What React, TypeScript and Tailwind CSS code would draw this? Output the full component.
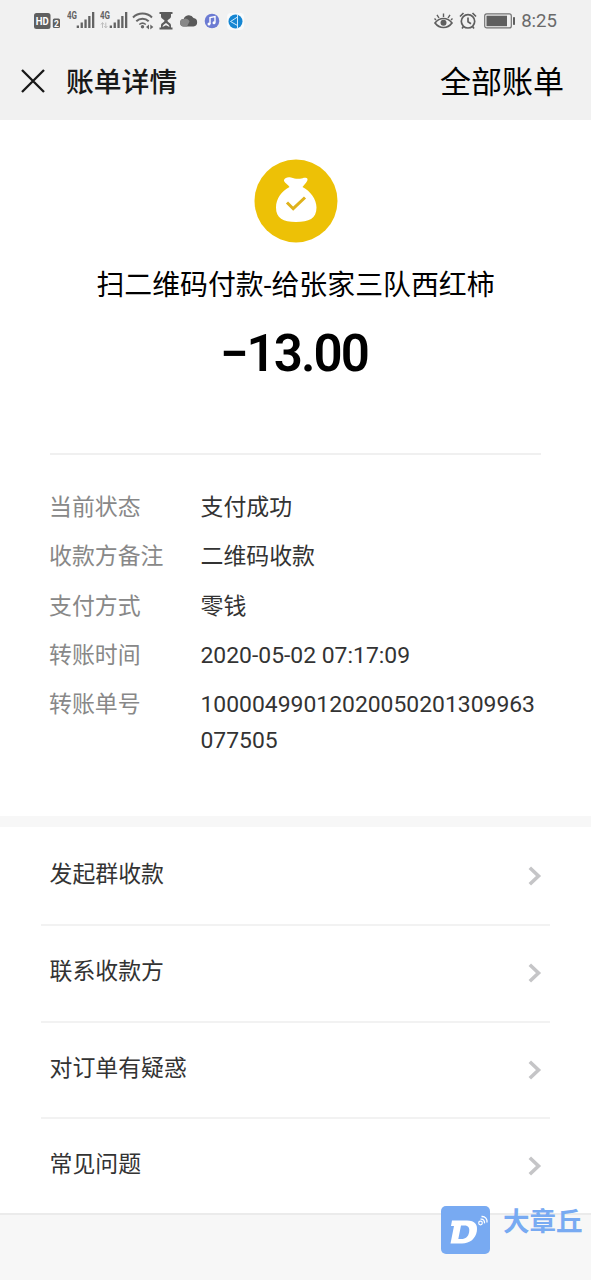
const details = [
  { label: "当前状态", value: "支付成功" },
  { label: "收款方备注", value: "二维码收款" },
  { label: "支付方式", value: "零钱" },
  { label: "转账时间", value: "2020-05-02 07:17:09" },
  { label: "转账单号", value: "10000499012020050201309963077505" },
];

const links = ["发起群收款", "联系收款方", "对订单有疑惑", "常见问题"];

const Signal = (props: { data?: boolean }) => (
  <svg width="29" height="22" viewBox="0 0 29 22" fill="#636363">
    <text
      x="0"
      y="9"
      fontSize="10.5"
      fontWeight="700"
      textLength="10"
      lengthAdjust="spacingAndGlyphs"
    >
      4G
    </text>
    {props.data && (
      <path
        d="M2.5 18v-5M1 14.5l1.5-2 1.5 2M5.8 12.5v5M4.3 16l1.5 2 1.5-2"
        stroke="#bdbdbd"
        strokeWidth="1"
        fill="none"
      />
    )}
    <rect x="9.7" y="15.5" width="2.3" height="2.5" />
    <rect x="13.6" y="12.5" width="2.3" height="5.5" />
    <rect x="17.4" y="9.5" width="2.3" height="8.5" />
    <rect x="21.2" y="6" width="2.3" height="12" />
    <rect x="25" y="2" width="2.3" height="16" />
  </svg>
);

const StatusBar = () => (
  <div className="flex h-[42px] items-center justify-between px-[34px]">
    <div className="flex items-center">
      <svg width="33" height="22" viewBox="0 0 33 22">
        <rect x="0" y="3" width="16.5" height="16" rx="2.5" fill="#5f5f5f" />
        <text
          x="1.8"
          y="14.8"
          fontSize="10.5"
          fontWeight="700"
          fill="#fff"
          textLength="13"
          lengthAdjust="spacingAndGlyphs"
        >
          HD
        </text>
        <rect x="18.8" y="8.5" width="7.2" height="9.5" rx="1.5" fill="#5f5f5f" />
        <text x="20" y="16.5" fontSize="8.5" fontWeight="700" fill="#fff">
          2
        </text>
      </svg>
      <Signal />
      <div className="ml-[4px]">
        <Signal data />
      </div>
      <svg
        className="ml-[3px]"
        width="22"
        height="22"
        viewBox="0 0 22 22"
        fill="none"
        stroke="#666"
        strokeWidth="2"
      >
        <path d="M1 7.500a13.500 13.500 0 0 1 19 0" />
        <path d="M4.300 11.200a9 9 0 0 1 12.400 0" />
        <path d="M7.300 14.500a5 5 0 0 1 6.500 0" strokeWidth="1.5" />
        <circle cx="10.5" cy="16.8" r="1.7" fill="#666" stroke="none" />
        <path d="M17 14.500v5l-3-2.500zM18.300 14.500v5l3-2.500z" fill="#666" stroke="none" />
      </svg>
      <svg className="ml-[5px]" width="14" height="18" viewBox="0 0 14 18">
        <path d="M.5 1h13M.5 16.500h13" stroke="#5c5c5c" strokeWidth="2" />
        <path
          d="M2 1.500v3c0 2.200 3.500 3 3.500 4.300S2 11 2 13.500V16h10v-2.500c0-2.500-3.500-3.400-3.500-4.700S12 6.700 12 4.500v-3z"
          fill="#5c5c5c"
        />
        <path d="M3.500 15c.3-2.200 1.500-2.500 3.500-4 2 1.500 3.200 1.800 3.500 4l-3.500-1.700z" fill="#f1f1f1" />
      </svg>
      <svg className="ml-[7px]" width="18" height="14" viewBox="0 0 18 14">
        <path
          d="M4 12.500a3.700 3.700 0 0 1-.3-7.400A5.300 5.300 0 0 1 13.500 4a4.300 4.300 0 0 1 0 8.500z"
          fill="#5a5a5a"
        />
        <path d="M4 12.500a3.700 3.700 0 0 1-.3-7.400 4 4 0 0 1 5.800 2.400L7 12.500z" fill="#888" />
      </svg>
      <svg className="ml-[6px]" width="16" height="16" viewBox="0 0 16 16">
        <circle cx="8" cy="8" r="7.3" fill="#6c7bd3" />
        <path d="M6 11V4.600l5-1v6" fill="none" stroke="#fff" strokeWidth="1.4" />
        <circle cx="5" cy="11" r="1.5" fill="#fff" />
        <circle cx="10" cy="9.8" r="1.5" fill="#fff" />
      </svg>
      <svg className="ml-[7px]" width="17" height="17" viewBox="0 0 17 17">
        <rect width="17" height="17" rx="4" fill="#f8fafb" />
        <circle cx="8.5" cy="8.5" r="7" fill="#1586d2" />
        <path
          d="M10.500 1.500v14M3.500 8.500l7-4.500M3.500 8.500l7 4"
          fill="none"
          stroke="#cfeaff"
          strokeWidth="1"
        />
      </svg>
    </div>

    <div className="flex items-center">
      <svg
        width="19"
        height="18"
        viewBox="0 0 19 18"
        fill="none"
        stroke="#5f5f5f"
        strokeWidth="1.7"
      >
        <path d="M1 11c4.500-6 12.500-6 17 0-4.500 6-12.500 6-17 0z" />
        <circle cx="9.5" cy="10.8" r="3" fill="#5f5f5f" stroke="none" />
        <path
          d="M9.500 5V1.500M5 6L3 2.800M14 6l2-3.200M2 8L.5 6.500M17 8l1.500-1.500"
          strokeWidth="1.4"
        />
      </svg>
      <svg
        className="ml-[6px]"
        width="18"
        height="18"
        viewBox="0 0 18 18"
        fill="none"
        stroke="#5f5f5f"
        strokeWidth="1.7"
      >
        <circle cx="9" cy="9.3" r="6.7" />
        <path d="M9 5.500v4.200l3 2M1 4.500L4.500 1M17 4.500L13.500 1M4.500 14.500L3 16.500M13.500 14.500l1.500 2" />
      </svg>
      <svg className="ml-[7px]" width="32" height="16" viewBox="0 0 32 16">
        <rect
          x=".7"
          y=".9"
          width="26.6"
          height="14"
          rx="2"
          fill="none"
          stroke="#737373"
          strokeWidth="1.2"
        />
        <rect x="2.5" y="2.7" width="20.5" height="10.5" fill="#5f5f5f" />
        <rect x="29" y="4" width="2" height="8" rx=".8" fill="#5f5f5f" />
      </svg>
      <span className="ml-[5px] text-[18.6px] leading-none text-[#6a6a6a]">8:25</span>
    </div>
  </div>
);

const Header = () => (
  <div className="flex h-[78px] items-center pl-[20px] pr-[27px] pt-[4px]">
    <svg width="26" height="26" viewBox="0 0 26 26" className="mb-[4px]">
      <path d="M2 2l22 22M24 2L2 24" stroke="#181818" strokeWidth="2.3" />
    </svg>
    <h1 className="ml-[20px] flex-1 text-[27.8px] font-medium leading-[40px] text-[#181818]">
      账单详情
    </h1>
    <span className="text-[31px] leading-[40px] text-black">全部账单</span>
  </div>
);

const MoneyBag = () => (
  <svg width="84" height="84" viewBox="0 0 84 84">
    <circle cx="42" cy="42" r="41.5" fill="#edc106" />
    <path
      d="M30 21c1-2.500 4-3.200 7-2.500 3.500.8 5 1.700 9 1.200 2.500-.3 4.500-1.500 6.500-.7 1.800.7 1 2.800-.3 4.500L48.500 28c8 4 14 12.500 14 20.500C62.500 59.500 55 63 42 63s-20-4-20-14.500c0-8.500 5.500-16.500 13.500-20.500-1-2.200-6-4.500-5.500-7z"
      fill="#fff"
    />
    <path d="M33 43.500l6.200 6.200L51 38.500" fill="none" stroke="#dfb21b" strokeWidth="3" />
  </svg>
);

const Watermark = () => (
  <div className="absolute left-[441px] top-[1206px] flex text-[#78aaf2]">
    <svg width="49" height="48" viewBox="0 0 49 48">
      <rect width="49" height="48" rx="5" fill="#78aaf2" />
      <path
        d="M11 14.500h15c8 0 11 4 9.800 11S29 37.500 21 37.500H9.500l3.500-17.500H10zM20 19.500l-2.700 13.500h3c4.500 0 7-2.500 7.800-6.800.8-4.400-.7-6.700-4.600-6.700z"
        fill="#fff"
        fillRule="evenodd"
      />
      <circle cx="39.5" cy="17" r="1.8" fill="none" stroke="#fff" strokeWidth="1.2" />
      <path
        d="M39.500 13.200c2.800-.3 4.300 1.500 4 4.200M40.500 10.500c3.800-.3 6 2.500 5.500 6"
        fill="none"
        stroke="#fff"
        strokeWidth="1.3"
      />
    </svg>
    <span className="ml-[13px] text-[26.5px] font-bold leading-[32px]">大章丘</span>
  </div>
);

export default function App() {
  return (
    <div className="relative flex h-[1280px] w-[591px] flex-col overflow-hidden bg-[#f7f7f7] font-['Roboto','Noto_Sans_CJK_SC',sans-serif]">
      <div className="h-[120px] bg-[#f1f1f1]">
        <StatusBar />
        <Header />
      </div>

      <div className="h-[696px] bg-white px-[50px]">
        <div className="flex h-[335px] flex-col items-center border-b-2 border-[#f0f0f0] pt-[39px]">
          <MoneyBag />
          <p className="mt-[23px] whitespace-nowrap text-[27.9px] leading-[40px] text-black">
            扫二维码付款-给张家三队西红柿
          </p>
          <p className="mt-[18px] pr-[3px] text-[51px] font-semibold leading-[60px] tracking-[-1.9px] text-black">
            −13.00
          </p>
        </div>
        <dl className="flex flex-col gap-[13.3px] pt-[35px] text-[22.9px] leading-[36px]">
          {details.map((item) => (
            <div key={item.label} className="flex">
              <dt className="-ml-px w-[151.5px] shrink-0 text-[#888]">{item.label}</dt>
              <dd className="w-[340px] break-all text-[#333]">{item.value}</dd>
            </div>
          ))}
        </dl>
      </div>

      <ul className="mt-[11px] border-b-2 border-[#ebebeb] bg-white px-[41px] pt-[2px]">
        {links.map((link) => (
          <li
            key={link}
            className="flex h-[96.8px] items-center justify-between border-b-2 border-[#f2f2f2] px-[8.5px] text-[22.9px] text-[#333] last:h-[94px] last:border-b-0"
          >
            <span className="pb-[2.5px]">{link}</span>
            <svg width="14" height="20" viewBox="0 0 14 20">
              <path
                d="M1.800 1.800L10.500 10l-8.700 8.200"
                fill="none"
                stroke="#c5c5c7"
                strokeWidth="3.6"
              />
            </svg>
          </li>
        ))}
      </ul>

      <Watermark />
    </div>
  );
}
